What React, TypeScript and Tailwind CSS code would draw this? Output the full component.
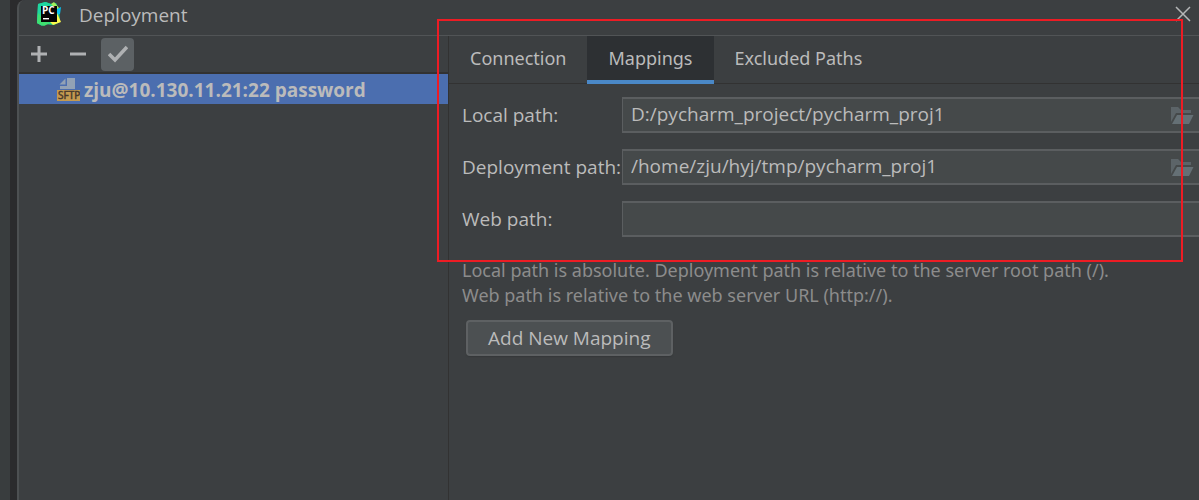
import React from "react";

type PathRowProps = {
  id: string;
  label: string;
  value: string;
  browse?: boolean;
};

function PyCharmLogo() {
  return (
    <svg viewBox="0 0 26 26" className="size-[26px]" aria-hidden="true">
      <path d="M2 3 L10 1 L15 3 L20 2 L23 8 L24 21 L18 24 L9 23 L6 25 L1 22 Z" fill="#21d789" />
      <path d="M9 1 L15 3 L8 9 L5 24 L1 22 L2 3 Z" fill="#1fd6a0" />
      <path d="M15 3 L18 1 L23 7 L21 9 Z" fill="#a5ef5a" />
      <path d="M21 8 L25 6 L24 13 L21 14 Z" fill="#07c3f2" />
      <path d="M21 12 L25 21 L17 24 L14 21 Z" fill="#fcf84a" />
      <path d="M2 12 L8 18 L14 22 L8 25 L1 22 Z" fill="#3fe070" />
      <rect x="5" y="5" width="16" height="16" fill="#050505" />
      <text x="6" y="13" fill="#fff" fontFamily="Open Sans, sans-serif" fontWeight="700" fontSize="10">PC</text>
      <rect x="7" y="17" width="6" height="1.4" fill="#fff" />
    </svg>
  );
}

function SftpIcon() {
  return (
    <svg viewBox="0 0 24 24" className="size-6 shrink-0" aria-hidden="true">
      <path d="M11 1 H19 V12 H4 V9 H11 Z" fill="#92a2b5" />
      <path d="M9.500 1.500 V7.500 H3.500 Z" fill="#92a2b5" />
      <rect x="1" y="13" width="23" height="11" fill="#c49a50" />
      <text x="2" y="22" fill="#4a3a2c" stroke="#4a3a2c" strokeWidth="0.5" fontFamily="Open Sans, sans-serif" fontWeight="500" fontSize="10">SFTP</text>
    </svg>
  );
}

function FolderIcon() {
  return (
    <svg viewBox="0 0 23 17" className="h-[17px] w-[23px]" aria-hidden="true">
      <path d="M0 0 H7 L10 3 H20 V6 H5 L0 15 Z" fill="#5c6468" />
      <path d="M6 8 H22.500 L18 17 H1 Z" fill="#657075" />
    </svg>
  );
}

function PathRow({ id, label, value, browse }: PathRowProps) {
  return (
    <div className="flex h-9 items-center">
      <label htmlFor={id} className="w-40 shrink-0 whitespace-nowrap">{label}</label>
      <div className="flex h-9 min-w-0 grow items-center border-2 border-r-0 border-l border-[#5b5e60] bg-[#45494a]">
        <input id={id} defaultValue={value} className="h-full min-w-0 grow bg-transparent px-2 pb-0.5 outline-none" />
        {browse && (
          <button type="button" aria-label={`Browse ${label}`} className="mr-[5px]">
            <FolderIcon />
          </button>
        )}
      </div>
    </div>
  );
}

export default function App() {
  return (
    <div className="relative flex min-h-screen overflow-hidden bg-[#2b2b2d] pl-[10px] font-['Open_Sans',sans-serif] text-[19px] leading-6 text-[#bbbbbb] shadow-[inset_10px_0_0_#393d3e]">
      <div className="ml-[7px] flex min-w-0 grow flex-col rounded-tl-lg border-l-2 border-[#4d5052] bg-[#3c3f41]">
        <header className="flex h-9 shrink-0 items-center border-b border-[#515456] pr-2 pb-[7px] pl-[17px]">
          <PyCharmLogo />
          <h1 className="ml-[17px] grow pt-0.5">Deployment</h1>
          <button type="button" aria-label="Close">
            <svg viewBox="0 0 16 16" className="size-4" fill="none" stroke="#b4b6b7" strokeWidth="1.5" aria-hidden="true">
              <path d="M1 1 L15 15 M15 1 L1 15" />
            </svg>
          </button>
        </header>

        <div className="flex min-h-0 grow">
          <aside className="w-[430px] shrink-0 border-r border-[#323232]">
            <div className="flex h-[38px] items-center gap-[7px] border-b-2 border-[#323232] pl-1">
              <button type="button" aria-label="Add" className="flex size-8 items-center justify-center">
                <svg viewBox="0 0 16 16" className="size-4" stroke="#afb1b3" strokeWidth="3" aria-hidden="true"><path d="M0 8 H16 M8 0 V16" /></svg>
              </button>
              <button type="button" aria-label="Remove" className="flex size-8 items-center justify-center">
                <svg viewBox="0 0 16 16" className="size-4" stroke="#afb1b3" strokeWidth="3" aria-hidden="true"><path d="M0 8 H16" /></svg>
              </button>
              <button type="button" aria-label="Use as default" className="flex size-[33px] items-center justify-center rounded bg-[#5c6164]">
                <svg viewBox="0 0 20 18" className="h-[18px] w-5" fill="none" stroke="#afb1b3" strokeWidth="3.6" aria-hidden="true"><path d="M1 9 L7 15 L19 2" /></svg>
              </button>
            </div>
            <ul>
              <li className="flex h-[30px] items-center gap-1 bg-[#4b6eaf] pl-[37px] font-bold whitespace-nowrap">
                <SftpIcon />
                <span className="pt-0.5">zju@10.130.11.21:22 password</span>
              </li>
            </ul>
          </aside>

          <main className="min-w-0 grow">
            <nav className="flex h-12 border-b border-[#323232] font-['Noto_Sans',sans-serif] text-[18px]">
              <button type="button" className="h-12 px-[21px] pb-1">Connection</button>
              <button type="button" className="h-12 border-b-4 border-[#4a88c7] bg-[#2d3033] px-[21px]">Mappings</button>
              <button type="button" className="h-12 px-[21px] pb-1">Excluded Paths</button>
            </nav>
            <form className="pt-[13px] pl-[13px]">
              <div className="flex flex-col gap-4">
                <PathRow id="local" label="Local path:" value="D:/pycharm_project/pycharm_proj1" browse />
                <PathRow id="deployment" label="Deployment path:" value="/home/zju/hyj/tmp/pycharm_proj1" browse />
                <PathRow id="web" label="Web path:" value="" />
              </div>
              <p className="mt-[21px] font-['Noto_Sans',sans-serif] text-[18px] leading-[25px] text-[#8c8c8c]">
                Local path is absolute. Deployment path is relative to the server root path (/).
                <br />
                Web path is relative to the web server URL (http://).
              </p>
              <button type="button" className="mt-3 ml-1 h-9 rounded border-2 border-[#5e6163] bg-[#4c5052] px-5 shadow-[0_1px_1px_#35383a]">
                Add New Mapping
              </button>
            </form>
          </main>
        </div>
      </div>
      <div className="pointer-events-none absolute top-[19px] right-4 left-[437px] h-[243px] border-2 border-[#ed1c24]" />
    </div>
  );
}
